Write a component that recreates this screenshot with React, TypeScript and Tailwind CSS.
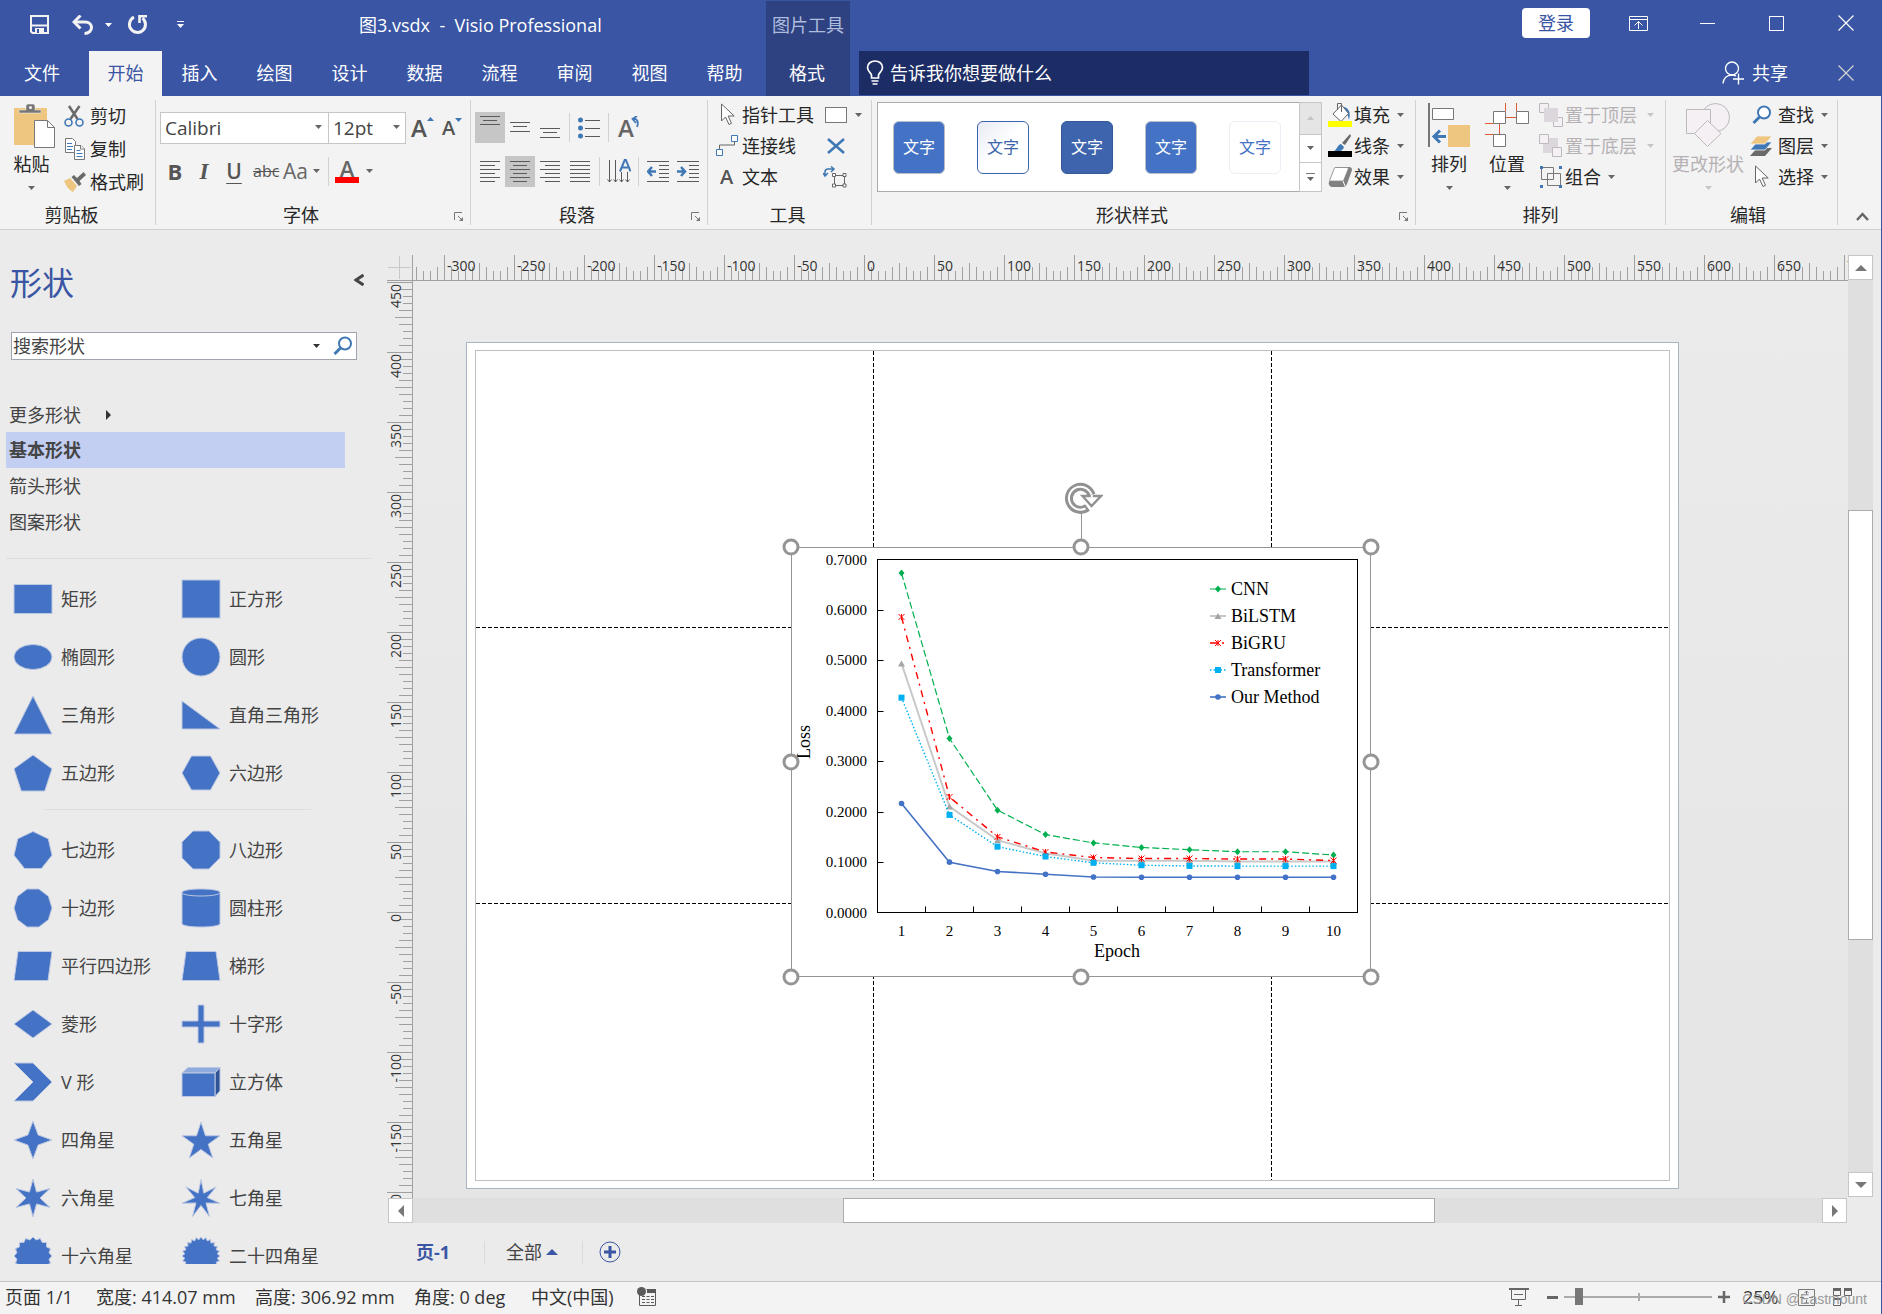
import React from 'react';

const FILL = '#4472c4';

const tabs = ['插入', '绘图', '设计', '数据', '流程', '审阅', '视图', '帮助'];

const Caret = ({ className = 'fill-[#666666]' }: { className?: string }) => (
  <svg className={`shrink-0 ${className}`} width="7" height="4" viewBox="0 0 7 4">
    <path d="M0 0h7L3.5 4z" />
  </svg>
);

interface GroupProps {
  label: string;
  className: string;
  launcher?: boolean;
  children: React.ReactNode;
}

const Group: React.FC<GroupProps> = ({ label, className, launcher, children }) => (
  <section className={`relative my-1 flex h-[125px] flex-col border-r border-[#d2d2d2] ${className}`}>
    <div className="flex h-[105px] shrink-0">{children}</div>
    <h2 className={`flex h-5 items-center justify-center text-[18px] leading-none text-[#262626] ${launcher ? 'pr-7' : 'pr-3'}`}>
      {label}
    </h2>
    {launcher && (
      <button aria-label={`${label}设置`} className="absolute right-[6px] bottom-[3px]">
        <svg width="10" height="10" viewBox="0 0 10 10" fill="none" stroke="#777">
          <path d="M.5 8V.5H8M4 4l4 4" />
          <path d="M9 5v4H5z" fill="#777" stroke="none" />
        </svg>
      </button>
    )}
  </section>
);

interface RowButtonProps {
  icon: React.ReactNode;
  label: string;
  caret?: boolean;
  disabled?: boolean;
  className?: string;
}

const RowButton: React.FC<RowButtonProps> = ({ icon, label, caret, disabled, className = 'h-[31px]' }) => (
  <button
    disabled={disabled}
    className={`flex items-center pb-[2px] text-[18px] leading-none whitespace-nowrap ${disabled ? 'text-[#b5b1b5]' : 'text-[#262626]'} ${className}`}
  >
    <span className="flex w-[26px] shrink-0 items-center">{icon}</span>
    {label}
    {caret && <Caret className={disabled ? 'ml-[10px] fill-[#c8c4c8]' : 'ml-[7px] fill-[#666666]'} />}
  </button>
);

const BigButton: React.FC<RowButtonProps> = ({ icon, label, disabled, className = '' }) => (
  <button
    disabled={disabled}
    className={`flex h-[102px] shrink-0 flex-col items-center pt-[3px] text-[18px] leading-none ${disabled ? 'text-[#b5b1b5]' : 'text-[#262626]'} ${className}`}
  >
    {icon}
    <span className="flex h-8 items-center whitespace-nowrap">{label}</span>
    <Caret className={disabled ? 'mt-[6px] fill-[#c8c4c8]' : 'mt-[6px] fill-[#666666]'} />
  </button>
);

const Lines = ({ rows }: { rows: [number, number, number][] }) => (
  <svg width="20" height="22" viewBox="0 0 20 22" stroke="#5a5a5a">
    {rows.map(([x1, x2, y]) => (
      <line key={y} x1={x1} x2={x2} y1={y + 0.5} y2={y + 0.5} />
    ))}
  </svg>
);

const Divider = ({ className = '' }: { className?: string }) => (
  <span className={`h-[29px] w-px shrink-0 bg-[#d2d2d2] ${className}`} />
);

const Cursor = () => (
  <svg width="16" height="23" viewBox="0 0 16 23" fill="#fff" stroke="#666">
    <path d="M1.5 1v17l4-4 3.5 7.5 2.5-1.2L8.2 13h6z" />
  </svg>
);

const Magnifier = () => (
  <svg width="20" height="20" viewBox="0 0 20 20" fill="none" stroke="#3f78b5">
    <circle cx="12" cy="7.5" r="6" strokeWidth="2" fill="#fff" />
    <path d="M7.5 12L1.5 18" strokeWidth="3" />
  </svg>
);

const CloseIcon = () => (
  <svg width="16" height="16" viewBox="0 0 16 16" fill="none" stroke="currentColor" strokeWidth="1.2">
    <path d="M.5.5l15 15M15.5.5l-15 15" />
  </svg>
);

/* ---------- header ---------- */

const TitleBar = () => (
  <div className="flex h-[51px]">
    <div className="flex w-[766px] items-center pb-[2px]">
      <button aria-label="保存" className="ml-[30px]">
        <svg width="19" height="19" viewBox="0 0 19 19" fill="none" stroke="#f3f3f3" strokeWidth="2">
          <path d="M1 1h17v17H2.5L1 16.5zM1 10.500h17" />
          <path d="M5 13h9v5H5z" fill="#f3f3f3" stroke="none" />
          <path d="M7 14h2v4H7z" fill="#3955a3" stroke="none" />
        </svg>
      </button>
      <button aria-label="撤消" className="ml-[23px]">
        <svg width="22" height="20" viewBox="0 0 22 20" fill="none" stroke="#f3f3f3" strokeWidth="3">
          <path d="M2 7h11c4.500 0 6.500 3 6.500 5.500 0 3-2.500 6-7 6" />
          <path d="M8.500.5L2 7l6.500 6.500" />
        </svg>
      </button>
      <button aria-label="撤消选项" className="ml-[11px]">
        <Caret className="fill-white" />
      </button>
      <button aria-label="重复" className="ml-[15px]">
        <svg width="21" height="21" viewBox="0 0 21 21" fill="none" stroke="#f3f3f3" strokeWidth="3">
          <path d="M7 3.200a8 8 0 1 0 8.500 1" />
          <path d="M12.500 9V2.200H20" strokeWidth="2.600" />
        </svg>
      </button>
      <button aria-label="自定义快速访问工具栏" className="ml-[29px]">
        <svg width="7" height="8" viewBox="0 0 7 8" fill="#fff">
          <path d="M0 0h7v1H0zM0 3h7L3.5 7z" />
        </svg>
      </button>
      <h1 className="ml-[175px] text-[18px] leading-none whitespace-pre text-white">图3.vsdx  -  Visio Professional</h1>
    </div>
    <div className="mt-px flex w-[84px] items-center justify-center bg-[#2e4180] pb-[3px] text-[18px] leading-none whitespace-nowrap text-[#aebcdf]">
      图片工具
    </div>
    <div className="flex flex-1 items-center justify-end pr-px text-white">
      <button className="mr-[14px] mb-[5px] h-[30px] w-[68px] rounded-sm bg-white text-[18px] leading-none text-[#3955a3]">登录</button>
      <button aria-label="功能区显示选项" className="mb-[5px] flex w-[69px] justify-center">
        <svg width="19" height="15" viewBox="0 0 19 15" fill="none" stroke="#fff">
          <path d="M.5.5h18v14H.5zM.5 3.500h18M9.500 13V5.500M5.500 9.500l4-4 4 4" />
        </svg>
      </button>
      <button aria-label="最小化" className="mb-[5px] flex w-[69px] justify-center">
        <span className="h-px w-[15px] bg-white" />
      </button>
      <button aria-label="最大化" className="mb-[5px] flex w-[69px] justify-center">
        <span className="size-[15px] border border-white" />
      </button>
      <button aria-label="关闭" className="mb-[5px] flex w-[69px] justify-center">
        <CloseIcon />
      </button>
    </div>
  </div>
);

const TabBar = () => (
  <div className="flex h-[45px] text-[18px] leading-none text-white">
    <nav className="flex w-[766px]">
      <button className="w-[89px] pr-[5px] pb-[2px]">文件</button>
      <button className="w-[73px] bg-[#f3f3f3] pb-[2px] text-[#3955a3]">开始</button>
      {tabs.map((tab) => (
        <button key={tab} className="w-[75px] pb-[2px]">{tab}</button>
      ))}
    </nav>
    <button className="w-[84px] shrink-0 bg-[#2e4180] pr-[2px] pb-[2px]">格式</button>
    <label className="ml-[9px] flex h-[44px] w-[450px] items-center bg-[#1c2c64] pb-px pl-[7px]">
      <svg width="18" height="25" viewBox="0 0 18 25" fill="none" stroke="#fff" strokeWidth="1.700">
        <path d="M5.500 18v-3c0-2-4-3.500-4-7.500C1.500 3.500 5 1 9 1s7.500 2.500 7.500 6.500c0 4-4 5.500-4 7.500v3z" />
        <path d="M5.500 21h7M6.500 24h5" />
      </svg>
      <input
        aria-label="告诉我"
        placeholder="告诉我你想要做什么"
        className="ml-[6px] h-full flex-1 bg-transparent outline-none placeholder:text-white"
      />
    </label>
    <div className="flex flex-1 items-center justify-end pr-px pb-[2px]">
      <button className="mr-[23px] flex items-center">
        <svg className="mr-2" width="22" height="24" viewBox="0 0 22 24" fill="none" stroke="#fff" strokeWidth="1.400">
          <circle cx="10" cy="7.500" r="6.500" />
          <path d="M1 22.500c.5-5 4-8.500 9-8.500 2 0 3 .4 4 1M16.500 12.500v11M11 18h11" />
        </svg>
        共享
      </button>
      <button aria-label="关闭窗口" className="flex w-[69px] justify-center text-[#d5d5d5]">
        <CloseIcon />
      </button>
    </div>
  </div>
);

/* ---------- ribbon ---------- */

const ClipboardGroup = () => (
  <Group label="剪贴板" className="w-[156px]">
    <BigButton
      label="粘贴"
      className="ml-[13px] w-[43px] pr-[6px]"
      icon={
        <svg className="mr-[-6px]" width="43" height="45" viewBox="0 0 43 45">
          <rect x="1" y="5" width="33" height="37" rx="1" fill="#eec67f" />
          <path d="M6 10V7h7V3c0-1 1-2 2-2h5c1 0 2 1 2 2v4h6v3z" fill="#777" stroke="#f3f3f3" strokeWidth=".5" />
          <circle cx="17.500" cy="4.500" r="1.500" fill="#f3f3f3" />
          <path d="M21.500 17.500h13l7 7v20h-20z" fill="#fff" stroke="#777" />
          <path d="M34.500 17.500v7h7" fill="none" stroke="#777" />
        </svg>
      }
    />
    <div className="ml-2 flex flex-col">
      <RowButton
        className="h-[33px]"
        label="剪切"
        icon={
          <svg width="20" height="22" viewBox="0 0 20 22" fill="none">
            <path d="M5 1l8.500 13M15.500 1L6.500 14" stroke="#6a6a6a" strokeWidth="2.500" />
            <circle cx="4.500" cy="17.500" r="3.500" stroke="#3f78b5" strokeWidth="1.600" />
            <circle cx="15.500" cy="17.500" r="3.500" stroke="#3f78b5" strokeWidth="1.600" />
          </svg>
        }
      />
      <RowButton
        className="h-[33px]"
        label="复制"
        icon={
          <svg className="ml-px" width="20" height="22" viewBox="0 0 20 22" fill="#fff" stroke="#777">
            <path d="M.5.5h7l3 3v11H.5z" />
            <path d="M2 5.500h5M2 8.500h6M2 11.500h5" stroke="#3f78b5" />
            <path d="M9.500 7.500h6.500l3.500 3.500v10.500h-10z" />
            <path d="M15.500 7.500V11h4" />
            <path d="M11.500 12.500h4M11.500 15.500h6M11.500 18.500h6" stroke="#3f78b5" />
          </svg>
        }
      />
      <RowButton
        className="h-[33px]"
        label="格式刷"
        icon={
          <svg width="23" height="20" viewBox="0 0 23 20">
            <path d="M0 9l6-3 7 8-4 6c-4-2-7-6-9-11z" fill="#eec67f" />
            <path d="M7.500 5l2.500-2 3 3 6.500-6 2.500 3-6.500 6 2 3-2.500 2z" fill="#6a6a6a" />
          </svg>
        }
      />
    </div>
  </Group>
);

const FontGroup = () => (
  <Group label="字体" className="w-[315px] pl-1" launcher>
    <div className="flex flex-col text-[#555555]">
      <div className="mt-3 flex h-8 items-center">
        <div className="relative">
          <select
            aria-label="字体名称"
            defaultValue="Calibri"
            className="block h-8 w-[169px] appearance-none border border-[#c6c6c6] bg-white px-1 text-[19px] leading-none text-[#444444]"
          >
            <option>Calibri</option>
          </select>
          <span className="pointer-events-none absolute top-[13px] right-[7px]"><Caret /></span>
        </div>
        <div className="relative">
          <select
            aria-label="字号"
            defaultValue="12pt"
            className="-ml-px block h-8 w-[78px] appearance-none border border-[#c6c6c6] bg-white px-1 text-[19px] leading-none text-[#444444]"
          >
            <option>12pt</option>
          </select>
          <span className="pointer-events-none absolute top-[13px] right-[6px]"><Caret /></span>
        </div>
        <button aria-label="增大字号" className="ml-[5px] flex items-start text-[24px] leading-none font-semibold">
          A
          <svg className="mt-px" width="7" height="4" viewBox="0 0 7 4" fill="#3f78b5"><path d="M0 4h7L3.500 0z" /></svg>
        </button>
        <button aria-label="减小字号" className="ml-[8px] flex items-start text-[20px] leading-none font-semibold">
          A
          <svg width="7" height="4" viewBox="0 0 7 4" fill="#3f78b5"><path d="M0 0h7L3.500 4z" /></svg>
        </button>
      </div>
      <div className="mt-3 flex h-[30px] items-center leading-none">
        <button className="ml-[7px] w-[16px] text-[22px] font-bold">B</button>
        <button className="ml-[13px] w-[16px] font-['Liberation_Serif',serif] text-[23px] font-bold italic">I</button>
        <button className="ml-[13px] w-[18px] text-[21px] font-semibold underline decoration-1 underline-offset-4">U</button>
        <button className="ml-[10px] w-[26px] text-[16px] line-through">abc</button>
        <button className="ml-1 flex items-center text-[21px] text-[#666666]">
          Aa<span className="ml-[5px]"><Caret /></span>
        </button>
        <Divider className="ml-[8px]" />
        <button aria-label="字体颜色" className="ml-[6px] flex w-6 flex-col items-center text-[22px] font-semibold text-[#666666]">
          <span className="h-[18px] leading-[18px]">A</span>
          <span className="h-[6px] w-6 bg-[#ff0000]" />
        </button>
        <button aria-label="字体颜色选项" className="ml-[7px]"><Caret /></button>
      </div>
    </div>
  </Group>
);

const ParagraphGroup = () => (
  <Group label="段落" className="w-[237px] pl-1" launcher>
    <div className="flex flex-col">
      <div className="mt-3 flex h-[31px] items-center">
        <button aria-label="顶端对齐" className="flex h-[31px] w-[30px] justify-center bg-[#c6c6c6]">
          <Lines rows={[[0, 20, 4], [3, 17, 8], [0, 20, 12]]} />
        </button>
        <button aria-label="中部对齐" className="flex w-[30px] justify-center">
          <Lines rows={[[0, 20, 5], [3, 17, 9], [0, 20, 14]]} />
        </button>
        <button aria-label="底端对齐" className="flex w-[30px] justify-center">
          <Lines rows={[[0, 20, 11], [3, 17, 15], [0, 20, 20]]} />
        </button>
        <Divider className="ml-[4px]" />
        <button aria-label="项目符号" className="ml-[8px]">
          <svg width="22" height="22" viewBox="0 0 22 22" fill="#3f78b5">
            <circle cx="2.500" cy="3" r="2.500" />
            <circle cx="2.500" cy="11" r="2.500" />
            <circle cx="2.500" cy="19" r="2.500" />
            <path d="M7 3.500h15M7 11.500h15M7 19.500h15" stroke="#5a5a5a" />
          </svg>
        </button>
        <Divider className="ml-[8px]" />
        <button aria-label="旋转文本" className="ml-[9px] flex items-start text-[24px] leading-none font-semibold text-[#666666]">
          A
          <svg className="-ml-[3px]" width="9" height="12" viewBox="0 0 9 12" fill="none" stroke="#3f78b5" strokeWidth="1.800">
            <path d="M2 3c4-1 6 3 4 8M6 0L1.500 3 5 7" />
          </svg>
        </button>
      </div>
      <div className="mt-[13px] flex h-[31px] items-center">
        <button aria-label="左对齐" className="flex w-[30px] justify-center">
          <Lines rows={[[0, 20, 0], [0, 15, 4], [0, 20, 8], [0, 15, 12], [0, 20, 16], [0, 15, 20]]} />
        </button>
        <button aria-label="居中" className="flex h-[31px] w-[30px] items-center justify-center bg-[#c6c6c6]">
          <Lines rows={[[0, 20, 0], [3, 17, 4], [0, 20, 8], [3, 17, 12], [0, 20, 16], [3, 17, 20]]} />
        </button>
        <button aria-label="右对齐" className="flex w-[30px] justify-center">
          <Lines rows={[[0, 20, 0], [5, 20, 4], [0, 20, 8], [5, 20, 12], [0, 20, 16], [5, 20, 20]]} />
        </button>
        <button aria-label="两端对齐" className="flex w-[30px] justify-center">
          <Lines rows={[[0, 20, 0], [0, 20, 4], [0, 20, 8], [0, 20, 12], [0, 20, 16], [0, 20, 20]]} />
        </button>
        <Divider className="ml-[4px]" />
        <button aria-label="文字方向" className="ml-[7px]">
          <svg width="24" height="25" viewBox="0 0 24 25" fill="none" stroke="#5a5a5a">
            <path d="M2.500 1v22M8.500 1v22M14.500 13v10M20.500 13v10M.5 20.500l2 2.500 2-2.500M6.500 20.500l2 2.500 2-2.500M12.500 20.500l2 2.500 2-2.500M18.500 20.500l2 2.500 2-2.500" />
            <path d="M13 12.500L17.700 1h1.200l4.600 11.500M14.800 8.500h7" stroke="#3f78b5" strokeWidth="2" />
          </svg>
        </button>
        <Divider className="ml-[7px]" />
        <button aria-label="减少缩进量" className="ml-[8px]">
          <svg width="22" height="22" viewBox="0 0 22 22" fill="none" stroke="#5a5a5a">
            <path d="M0 .5h22M12 4.500h10M12 8.500h10M12 12.500h10M12 16.500h10M0 20.500h22" />
            <path d="M9 10.500H2M5 6l-4 4.500L5 15" stroke="#3f78b5" strokeWidth="2.500" />
          </svg>
        </button>
        <button aria-label="增加缩进量" className="ml-[8px]">
          <svg width="22" height="22" viewBox="0 0 22 22" fill="none" stroke="#5a5a5a">
            <path d="M0 .5h22M12 4.500h10M12 8.500h10M12 12.500h10M12 16.500h10M0 20.500h22" />
            <path d="M0 10.500h7M4 6l4 4.500L4 15" stroke="#3f78b5" strokeWidth="2.500" />
          </svg>
        </button>
      </div>
    </div>
  </Group>
);

const ToolsGroup = () => (
  <Group label="工具" className="w-[164px] pl-2">
    <div className="flex w-[107px] flex-col">
      <RowButton label="指针工具" icon={<span className="ml-[4px]"><Cursor /></span>} />
      <RowButton
        label="连接线"
        icon={
          <svg width="22" height="21" viewBox="0 0 22 21" fill="#fff" stroke="#3f78b5">
            <path d="M3.500 14v-4h15V6" fill="none" stroke="#666" />
            <path d="M15.500.5h6v6h-6zM.5 14.500h6v6h-6z" />
          </svg>
        }
      />
      <RowButton label="文本" icon={<span className="ml-[4px] text-[20px] font-semibold text-[#555555]">A</span>} />
    </div>
    <div className="flex flex-col">
      <button aria-label="矩形" className="flex h-[31px] items-center pb-[2px] pl-[2px]">
        <span className="h-4 w-[22px] border border-[#777777] bg-white" />
        <span className="ml-[8px]"><Caret /></span>
      </button>
      <button aria-label="连接点" className="flex h-[31px] items-center pb-[2px] pl-[4px]">
        <svg width="18" height="16" viewBox="0 0 18 16" fill="none" stroke="#3f78b5" strokeWidth="2.500">
          <path d="M1 1l16 14M17 1L1 15" />
        </svg>
      </button>
      <button aria-label="文本块" className="flex h-[31px] items-center pb-[2px]">
        <svg width="24" height="22" viewBox="0 0 24 22" fill="none" stroke="#666">
          <path d="M2 10V6c0-2 1-3 3-3h5M0 7l2 3 3-3M8 .5L11 3 8 6" stroke="#3f78b5" strokeWidth="1.500" />
          <path d="M11.500 9.500h10v10h-10z" />
          <path d="M9.500 7.500h3v3h-3zM20 7.500h3v3h-3zM9.500 18h3v3h-3zM20 18h3v3h-3z" fill="#fff" />
        </svg>
      </button>
    </div>
  </Group>
);

const styleTiles = [
  'border-[#b9bdc6] bg-[#4472c4] text-white',
  'border-[#3c64ac] bg-linear-to-br from-[#e9ebf5] via-white to-white text-[#3c64ac]',
  'border-[#35599b] bg-[#3d64ac] text-white',
  'border-[#b9bdc6] bg-[#4472c4] text-white',
  'border-[#eceef5] bg-white text-[#4472c4]',
];

const StylesGroup = () => (
  <Group label="形状样式" className="min-w-[544px] flex-1 pl-[5px]" launcher>
    <div className="mt-[2px] flex h-[90px] flex-1">
      <div className="flex flex-1 items-center gap-8 border border-[#ababab] bg-white pl-[15px]">
        {styleTiles.map((tile, i) => (
          <button key={i} className={`h-[53px] w-[52px] shrink-0 rounded-md border pb-px text-[16px] leading-none ${tile}`}>
            文字
          </button>
        ))}
      </div>
      <div className="-ml-px flex w-[23px] flex-col">
        <button aria-label="上一行" className="flex h-[33px] items-center justify-center border border-[#c6c6c6] bg-[#e5e5e5]">
          <Caret className="rotate-180 fill-[#c4c4c4]" />
        </button>
        <button aria-label="下一行" className="-mt-px flex h-[30px] items-center justify-center border border-[#c6c6c6] bg-white">
          <Caret />
        </button>
        <button aria-label="更多样式" className="-mt-px flex h-[30px] flex-col items-center justify-center gap-[3px] border border-[#c6c6c6] bg-white">
          <span className="h-px w-[9px] bg-[#777777]" />
          <Caret />
        </button>
      </div>
    </div>
    <div className="ml-[6px] flex w-[87px] flex-col">
      <RowButton
        caret
        label="填充"
        icon={
          <svg width="25" height="25" viewBox="0 0 25 25">
            <path d="M16 5c5 1 7 6 5 13-1-5-2-7-5-8z" fill="#3f78b5" />
            <path d="M5 12l8.500-9 7 8.500-7.500 8z" fill="#fff" stroke="#666" />
            <path d="M9.500 8V1.500h4V10" fill="none" stroke="#666" />
            <rect y="19" width="24" height="6" fill="#ffff00" />
          </svg>
        }
      />
      <RowButton
        caret
        label="线条"
        icon={
          <svg width="25" height="25" viewBox="0 0 25 25">
            <path d="M22 1l1 2-6 9-3-2z" fill="#6a6a6a" />
            <path d="M13 11l3 3c-1 4-5 5-11 5 4-2 4-7 8-8z" fill="#3f78b5" />
            <rect y="18" width="24" height="6" fill="#000" />
          </svg>
        }
      />
      <RowButton
        caret
        label="效果"
        icon={
          <svg width="25" height="22" viewBox="0 0 25 22">
            <path d="M7 1h14c2 0 3 1 3 3l-5 14c-1 2-2 3-4 3H4c-2 0-4-3-3-5z" fill="#808080" />
            <path d="M8 1.500h11c1 0 1.500 1 1 2l-4 10c-.4 1-1 1.500-2 1.500H3c-1 0-1.400-.8-1-1.600L6 3c.4-1 1-1.500 2-1.500z" fill="#fff" stroke="#888" strokeWidth=".8" />
            <path d="M15 15l2 5" stroke="#fff" />
          </svg>
        }
      />
    </div>
  </Group>
);

const ArrangeGroup = () => (
  <Group label="排列" className="w-[250px] pl-3">
    <BigButton
      label="排列"
      className="w-[42px]"
      icon={
        <svg width="42" height="45" viewBox="0 0 42 45">
          <path d="M0 0h2v44H0z" fill="#777" />
          <path d="M4.500 5.500h21v11h-21z" fill="#fff" stroke="#777" />
          <path d="M20 22h22v22H20z" fill="#eec67f" />
          <path d="M18 33.500H6M12 27.500l-6 6 6 6" fill="none" stroke="#3f78b5" strokeWidth="3" />
        </svg>
      }
    />
    <BigButton
      label="位置"
      className="ml-[15px] w-[44px]"
      icon={
        <svg width="44" height="45" viewBox="0 0 44 45" fill="#fff" stroke="#777">
          <path d="M20.500 0v8M31.500 0v8M21 14.500h10M0 20.500h8M14.500 21v10M0 31.500h8" stroke="#dc5b36" />
          <path d="M8.500 8.500h12v12h-12zM31.500 8.500h12v12h-12zM8.500 31.500h12v12h-12z" />
        </svg>
      }
    />
    <div className="ml-[10px] flex flex-col">
      <RowButton
        caret
        disabled
        label="置于顶层"
        icon={
          <svg width="25" height="24" viewBox="0 0 25 24" fill="#f4f0f4" stroke="#bdb8bd">
            <path d="M.5.5h9v9h-9zM14.500 14.500h9v9h-9z" />
            <path d="M5 5h14v14H5z" fill="#dcd7dc" stroke="none" />
          </svg>
        }
      />
      <RowButton
        caret
        disabled
        label="置于底层"
        icon={
          <svg width="25" height="24" viewBox="0 0 25 24" fill="#f4f0f4" stroke="#bdb8bd">
            <path d="M4 4h15v15H4z" fill="#dcd7dc" stroke="none" />
            <path d="M.5.5h9v9h-9zM13.500 13.500h9v9h-9z" />
          </svg>
        }
      />
      <RowButton
        caret
        label="组合"
        icon={
          <svg width="25" height="24" viewBox="0 0 25 24" fill="none" stroke="#777">
            <path d="M2.500 2.500h12v12h-12zM8.500 8.500h13v12h-13z" />
            <path d="M1 1h3v3H1zM20 1h3v3h-3zM1 20h3v3H1zM20 20h3v3h-3z" fill="#3f78b5" stroke="none" />
          </svg>
        }
      />
    </div>
  </Group>
);

const EditGroup = () => (
  <Group label="编辑" className="w-[172px] pl-[5px]">
    <BigButton
      disabled
      label="更改形状"
      className="w-[74px]"
      icon={
        <svg width="44" height="45" viewBox="0 0 44 45" fill="#f4f0f4" stroke="#bdb8bd">
          <circle cx="29.500" cy="14.500" r="14" />
          <path d="M.5 6.500h24v24H.5z" />
          <path d="M21.500 17.500L35 30.500 21.500 43.500 8.500 30.500z" />
        </svg>
      }
    />
    <div className="ml-[7px] flex flex-col">
      <RowButton caret label="查找" icon={<Magnifier />} />
      <RowButton
        caret
        label="图层"
        icon={
          <svg className="-ml-[3px]" width="24" height="20" viewBox="0 0 24 20">
            <path d="M8 12h15l-7 8H1z" fill="#6a6a6a" />
            <path d="M8 6h15l-7 8H1z" fill="#3f78b5" stroke="#f3f3f3" strokeWidth=".8" />
            <path d="M8 0h15l-7 8H1z" fill="#eec67f" stroke="#f3f3f3" strokeWidth=".8" />
          </svg>
        }
      />
      <RowButton caret label="选择" icon={<span className="ml-[2px]"><Cursor /></span>} />
    </div>
  </Group>
);

const Ribbon = () => (
  <div className="flex h-[134px] shrink-0 border-b border-[#d0d0d0] bg-[#f3f3f3]">
    <ClipboardGroup />
    <FontGroup />
    <ParagraphGroup />
    <ToolsGroup />
    <StylesGroup />
    <ArrangeGroup />
    <EditGroup />
    <button aria-label="折叠功能区" className="flex w-[43px] items-end justify-center pb-2 pl-[6px]">
      <svg width="13" height="9" viewBox="0 0 13 9" fill="none" stroke="#666" strokeWidth="2.500">
        <path d="M1 8l5.500-6L12 8" />
      </svg>
    </button>
  </div>
);

/* ---------- shapes panel ---------- */

// Scales a ring of points so it fills a w x h box centred in the 40px cell
const fit = (ring: number[][], w: number, h: number) => {
  const xs = ring.map((p) => p[0]);
  const ys = ring.map((p) => p[1]);
  const [minX, maxX, minY, maxY] = [Math.min(...xs), Math.max(...xs), Math.min(...ys), Math.max(...ys)];
  return ring
    .map(([x, y]) => `${20 - w / 2 + ((x - minX) / (maxX - minX)) * w},${20 - h / 2 + ((y - minY) / (maxY - minY)) * h}`)
    .join(' ');
};

const polygon = (n: number, w: number, h: number, turn = 0) =>
  fit(
    Array.from({ length: n }, (_, i) => {
      const a = ((i + turn) / n) * Math.PI * 2;
      return [Math.sin(a), -Math.cos(a)];
    }),
    w,
    h
  );

const star = (n: number, inner: number, w: number, h: number) =>
  fit(
    Array.from({ length: n * 2 }, (_, i) => {
      const a = (i / n) * Math.PI;
      const r = i % 2 ? inner : 1;
      return [Math.sin(a) * r, -Math.cos(a) * r];
    }),
    w,
    h
  );

const poly = (points: string) => <polygon points={points} />;

const basicShapes: [string, React.ReactNode][] = [
  ['矩形', <rect x="1" y="5.500" width="38" height="29" />],
  ['正方形', <rect x="1" y="1" width="38" height="38" />],
  ['椭圆形', <ellipse cx="20" cy="20" rx="19" ry="12.500" />],
  ['圆形', <circle cx="20" cy="20" r="19" />],
  ['三角形', poly('20,1 39,39 1,39')],
  ['直角三角形', poly('1,6 39,34 1,34')],
  ['五边形', poly(polygon(5, 38, 36))],
  ['六边形', poly(polygon(6, 38, 34, 0.5))],
];

const moreShapes: [string, React.ReactNode][] = [
  ['七边形', poly(polygon(7, 38, 37))],
  ['八边形', poly(polygon(8, 38, 38, 0.5))],
  ['十边形', poly(polygon(10, 38, 38, 0.5))],
  [
    '圆柱形',
    <>
      <path d="M1 4.500C1 2.500 9 1 20 1s19 1.500 19 3.500v31c0 2-8 3.500-19 3.500S1 37.500 1 35.500z" />
      <path d="M1 4.500C1 6.500 9 8 20 8s19-1.500 19-3.500" fill="none" />
    </>,
  ],
  ['平行四边形', poly('5,5.500 39,5.500 35,34.500 1,34.500')],
  ['梯形', poly('5,5.500 35,5.500 39,34.500 1,34.500')],
  ['菱形', poly('20,6 39,20 20,34 1,20')],
  ['十字形', poly('17,1 23,1 23,17 39,17 39,23 23,23 23,39 17,39 17,23 1,23 1,17 17,17')],
  ['V 形', poly('1,1 20,1 39,20 20,39 1,39 20,20')],
  [
    '立方体',
    <>
      <path d="M1 11l6-5.500h32L34 11z" fill="#8faadc" />
      <path d="M34 11l5-5.500V29l-5 5.500z" fill="#2f5597" />
      <path d="M1 11h33v23.500H1z" />
    </>,
  ],
  ['四角星', poly(star(4, 0.38, 38, 38))],
  ['五角星', poly(star(5, 0.38, 38, 36))],
  ['六角星', poly(star(6, 0.36, 34, 38))],
  ['七角星', poly(star(7, 0.33, 38, 37))],
  ['十六角星', poly(star(16, 0.86, 38, 38))],
  ['二十四角星', poly(star(24, 0.86, 38, 38))],
];

const ShapeGrid = ({ shapes }: { shapes: [string, React.ReactNode][] }) => (
  <div className="grid grid-cols-[168px_1fr]">
    {shapes.map(([name, drawing]) => (
      <button key={name} className="flex h-[58px] items-center text-left text-[18px] leading-none whitespace-nowrap text-[#444444]">
        <svg className="mr-2 shrink-0" width="40" height="40" viewBox="0 0 40 40" fill={FILL} stroke="#bcc8e2">
          {drawing}
        </svg>
        {name}
      </button>
    ))}
  </div>
);

const ShapesPanel = () => (
  <aside className="flex w-[387px] shrink-0 flex-col overflow-hidden text-[18px] leading-none text-[#444444]">
    <div className="mt-8 flex h-[42px] items-center justify-between pr-[23px] pl-[10px]">
      <h2 className="text-[32px] leading-none text-[#3955a3]">形状</h2>
      <button aria-label="折叠形状窗口" className="mb-[6px]">
        <svg width="10" height="12" viewBox="0 0 10 12" fill="none" stroke="#444" strokeWidth="3">
          <path d="M9.500 1L2 6l7.500 5" />
        </svg>
      </button>
    </div>
    <div className="mt-7 ml-[11px] flex h-7 w-[346px] shrink-0 items-center border border-[#a0a5ad] bg-white pr-[3px]">
      <input
        aria-label="搜索形状"
        placeholder="搜索形状"
        className="h-full min-w-0 flex-1 bg-transparent pl-px outline-none placeholder:text-[#444444]"
      />
      <button aria-label="搜索选项"><Caret className="mr-[13px] fill-[#333333]" /></button>
      <button aria-label="搜索"><Magnifier /></button>
    </div>
    <div className="mt-[38px] flex flex-col items-start pl-[6px]">
      <button className="flex h-[34px] items-center pl-[3px]">
        更多形状
        <svg className="ml-[25px]" width="5" height="10" viewBox="0 0 5 10" fill="#333"><path d="M0 0v10l5-5z" /></svg>
      </button>
      <button className="h-9 w-[339px] bg-[#c2cef2] pl-[3px] text-left font-bold">基本形状</button>
      <button className="h-9 pl-[3px]">箭头形状</button>
      <button className="h-9 pl-[3px]">图案形状</button>
    </div>
    <hr className="mt-[18px] mr-4 ml-[6px] border-[#dedede]" />
    <div className="mt-[11px] mb-[17px] flex-1 overflow-hidden pl-[13px]">
      <ShapeGrid shapes={basicShapes} />
      <hr className="mt-[7px] mr-[76px] mb-[11px] ml-[31px] border-[#dedede]" />
      <ShapeGrid shapes={moreShapes} />
    </div>
  </aside>
);

/* ---------- drawing area ---------- */

// Ruler step is 70px for 50mm, split in ten
const tickLength = (i: number) => [26, 14, 10, 10, 14, 18, 14, 10, 10, 14][((i % 10) + 10) % 10];

const HorizontalRuler = () => (
  <svg className="h-[26px] min-w-0 flex-1" stroke="#a0a0a0">
    <path d={Array.from({ length: 210 }, (_, k) => `M${3.5 + k * 7} ${26 - tickLength(k + 6)}V26`).join('')} />
    <line x1="0" x2="100%" y1="25.500" y2="25.500" />
    <g stroke="none" fill="#333" fontSize="14">
      {Array.from({ length: 21 }, (_, i) => (
        <text key={i} x={34 + i * 70} y="16">{-300 + i * 50}</text>
      ))}
    </g>
  </svg>
);

const VerticalRuler = () => (
  <svg className="h-full w-[26px] shrink-0" stroke="#a0a0a0">
    <path d={Array.from({ length: 131 }, (_, k) => `M${26 - tickLength(k)} ${1.5 + k * 7}H26`).join('')} />
    <line x1="25.500" x2="25.500" y1="0" y2="100%" />
    <g stroke="none" fill="#333" fontSize="14" textAnchor="end">
      {Array.from({ length: 14 }, (_, i) => (
        <text key={i} transform={`translate(14 ${3 + i * 70}) rotate(-90)`}>{450 - i * 50}</text>
      ))}
    </g>
  </svg>
);

const PLOT = { left: 86.5, right: 566.5, top: 12.5, bottom: 365.5 };
const px = (i: number) => PLOT.left + 24 + i * 48;
const py = (v: number) => PLOT.bottom - (v / 0.7) * (PLOT.bottom - PLOT.top);

const Marker = ({ kind, x, y }: { kind: string; x: number; y: number }) => {
  switch (kind) {
    case 'diamond':
      return <path d={`M${x} ${y - 3.5}l3 3.500-3 3.500-3-3.500z`} fill="#00b050" />;
    case 'triangle':
      return <path d={`M${x} ${y - 3}l3.500 6h-7z`} fill="#a5a5a5" />;
    case 'cross':
      return <path d={`M${x - 3} ${y - 3}l6 6M${x + 3} ${y - 3}l-6 6M${x} ${y - 3}v6`} stroke="#ff0000" fill="none" />;
    case 'square':
      return <rect x={x - 3} y={y - 3} width="6" height="6" fill="#00b0f0" />;
    default:
      return <circle cx={x} cy={y} r="2.800" fill="#4472c4" />;
  }
};

const series = [
  { name: 'CNN', kind: 'diamond', color: '#00b050', width: 1.2, dash: '7 3', values: [0.673, 0.345, 0.203, 0.1545, 0.138, 0.129, 0.1245, 0.1205, 0.1205, 0.114] },
  { name: 'BiLSTM', kind: 'triangle', color: '#c9c9c9', width: 2, dash: '', values: [0.494, 0.21, 0.1435, 0.1176, 0.1025, 0.1025, 0.1025, 0.101, 0.101, 0.101] },
  { name: 'BiGRU', kind: 'cross', color: '#ff0000', width: 1.4, dash: '7 5 2 5', values: [0.586, 0.229, 0.15, 0.12, 0.109, 0.107, 0.107, 0.106, 0.106, 0.103] },
  { name: 'Transformer', kind: 'square', color: '#00b0f0', width: 1.4, dash: '1.500 2', values: [0.426, 0.1935, 0.1306, 0.111, 0.0985, 0.0937, 0.0923, 0.092, 0.092, 0.092] },
  { name: 'Our Method', kind: 'dot', color: '#4472c4', width: 1.6, dash: '', values: [0.216, 0.0998, 0.0813, 0.0759, 0.0704, 0.07, 0.07, 0.07, 0.07, 0.07] },
];

const LossChart = () => (
  <svg className="block size-full font-['Liberation_Serif',serif]" viewBox="0 0 580 430">
    <rect x={PLOT.left} y={PLOT.top} width={480} height={353} fill="#fff" stroke="#000" />
    {Array.from({ length: 8 }, (_, i) => (
      <g key={i}>
        {i > 0 && i < 7 && <path d={`M${PLOT.left} ${Math.round(py(i / 10)) + 0.5}h6`} stroke="#000" />}
        <text x="76" y={py(i / 10) + 5} fontSize="15" textAnchor="end">{(i / 10).toFixed(4)}</text>
      </g>
    ))}
    {Array.from({ length: 10 }, (_, i) => (
      <g key={i}>
        {i > 0 && <path d={`M${PLOT.left + i * 48} ${PLOT.bottom}v-6`} stroke="#000" />}
        <text x={px(i)} y="389" fontSize="15" textAnchor="middle">{i + 1}</text>
      </g>
    ))}
    <text x="326" y="410" fontSize="18" textAnchor="middle">Epoch</text>
    <text transform="translate(19 195) rotate(-90)" fontSize="18" textAnchor="middle">Loss</text>
    {series.map((s, n) => (
      <g key={s.name}>
        <polyline
          points={s.values.map((v, i) => `${px(i)},${py(v)}`).join(' ')}
          fill="none"
          stroke={s.color}
          strokeWidth={s.width}
          strokeDasharray={s.dash}
        />
        {s.values.map((v, i) => (
          <Marker key={i} kind={s.kind} x={px(i)} y={py(v)} />
        ))}
        <path d={`M419 ${42 + n * 27}h16`} stroke={s.color} strokeWidth={s.width} strokeDasharray={s.dash} />
        <Marker kind={s.kind} x={427} y={42 + n * 27} />
        <text x="440" y={48 + n * 27} fontSize="18">{s.name}</text>
      </g>
    ))}
  </svg>
);

const handles = [
  'left-0 top-0', 'left-1/2 top-0', 'left-full top-0',
  'left-0 top-1/2', 'left-full top-1/2',
  'left-0 top-full', 'left-1/2 top-full', 'left-full top-full',
];

const Canvas = () => (
  <div className="relative min-w-0 flex-1 overflow-hidden bg-linear-to-b from-[#ebebeb] to-[#e5e5e5]">
    <div className="absolute top-[61px] left-[53px] h-[847px] w-[1213px] border border-[#a9b4c3] bg-white">
      <div className="absolute inset-x-[8px] inset-y-[7px] border border-[#bfbfbf]">
        <span className="absolute inset-y-0 left-[397px] w-px bg-[repeating-linear-gradient(to_bottom,#000_0_4px,transparent_4px_6px)]" />
        <span className="absolute inset-y-0 left-[795px] w-px bg-[repeating-linear-gradient(to_bottom,#000_0_4px,transparent_4px_6px)]" />
        <span className="absolute inset-x-0 top-[276px] h-px bg-[repeating-linear-gradient(to_right,#000_0_4px,transparent_4px_6px)]" />
        <span className="absolute inset-x-0 top-[552px] h-px bg-[repeating-linear-gradient(to_right,#000_0_4px,transparent_4px_6px)]" />
      </div>
    </div>
    <figure className="absolute top-[266px] left-[378px] h-[430px] w-[580px] bg-white">
      <LossChart />
      <div className="absolute inset-0 border border-[#959595]" />
      <span className="absolute -top-9 left-1/2 h-9 w-px bg-[#959595]" />
      <svg className="absolute -top-[66px] left-[274px]" width="38" height="34" viewBox="0 0 38 34" fill="none">
        <circle cx="15.500" cy="17" r="15" fill="#fff" />
        <path d="M22.500 26.500A11.500 11.500 0 1 1 26.500 14" stroke="#919191" strokeWidth="8" />
        <path d="M20.500 27.500A11.500 11.500 0 1 1 26.800 15.500" stroke="#fff" strokeWidth="2" />
        <path d="M17.500 15h18.500L26.500 25z" fill="#fff" stroke="#919191" strokeWidth="2.400" />
        <path d="M26.800 14v4" stroke="#fff" strokeWidth="2" />
      </svg>
      {handles.map((pos) => (
        <span key={pos} className={`absolute size-[17px] -translate-1/2 rounded-full border-3 border-[#959595] bg-white ${pos}`} />
      ))}
    </figure>
  </div>
);

const ScrollButton = ({ label, d }: { label: string; d: string }) => (
  <button aria-label={label} className="flex size-[25px] shrink-0 items-center justify-center border border-[#c6c6c6] bg-white">
    <svg width="12" height="12" viewBox="0 0 12 12" fill="#777"><path d={d} /></svg>
  </button>
);

const Workspace = () => (
  <main className="flex min-w-0 flex-1 flex-col pt-[25px] pr-2">
    <div className="flex min-h-0 flex-1">
      <div className="flex min-w-0 flex-1 flex-col">
        <div className="flex h-[26px] shrink-0">
          <svg width="26" height="26" viewBox="0 0 26 26" stroke="#c8c8c8">
            <path d="M1 12.500h23M12.500 1v23" />
            <path d="M0 25.500h26M25.500 0v26" stroke="#a0a0a0" />
          </svg>
          <HorizontalRuler />
        </div>
        <div className="flex min-h-0 flex-1">
          <VerticalRuler />
          <Canvas />
        </div>
        <div className="mr-px ml-px flex h-[25px] shrink-0 bg-[#dfdfdf]">
          <ScrollButton label="向左滚动" d="M9 0v12L3 6z" />
          <div className="grid flex-1 grid-cols-[430fr_593fr_387fr]">
            <span className="col-start-2 border border-[#ababab] bg-white" />
          </div>
          <ScrollButton label="向右滚动" d="M3 0v12l6-6z" />
        </div>
      </div>
      <div className="mb-[26px] flex w-[25px] flex-col bg-[#dfdfdf]">
        <ScrollButton label="向上滚动" d="M0 9h12L6 3z" />
        <div className="grid flex-1 grid-rows-[230fr_429fr_232fr]">
          <span className="row-start-2 border border-[#ababab] bg-white" />
        </div>
        <ScrollButton label="向下滚动" d="M0 3h12L6 9z" />
      </div>
    </div>
    <div className="flex h-[58px] shrink-0 items-center pl-[29px] text-[18px] leading-none text-[#444444]">
      <button className="w-[68px] text-left font-bold text-[#3955a3]">页-1</button>
      <span className="h-[23px] w-px bg-[#dadada]" />
      <button className="flex items-center pl-[21px]">
        全部
        <svg className="ml-1" width="12" height="6" viewBox="0 0 12 6" fill="#3955a3"><path d="M0 6h12L6 0z" /></svg>
      </button>
      <span className="ml-6 h-[23px] w-px bg-[#dadada]" />
      <button aria-label="新建页" className="ml-4">
        <svg width="22" height="22" viewBox="0 0 22 22" fill="none" stroke="#3955a3">
          <circle cx="11" cy="11" r="10" />
          <path d="M11 5v12M5 11h12" strokeWidth="3" />
        </svg>
      </button>
    </div>
  </main>
);

const StatusBar = () => (
  <footer className="relative flex h-[33px] shrink-0 items-center border-t border-[#c6c6c6] bg-[#f3f3f3] pb-[2px] pl-[5px] text-[18px] leading-none whitespace-nowrap text-[#333333]">
    <span className="w-[91px]">页面 1/1</span>
    <span className="w-[159px]">宽度: 414.07 mm</span>
    <span className="w-[159px]">高度: 306.92 mm</span>
    <span className="w-[117px]">角度: 0 deg</span>
    <button className="w-[106px] text-left">中文(中国)</button>
    <button aria-label="宏">
      <svg width="20" height="20" viewBox="0 0 20 20" fill="none" stroke="#5a5a5a">
        <path d="M2.500 6v12.500h16V2.500h-9" />
        <path d="M10 2h9v4h-9z" fill="#5a5a5a" stroke="none" />
        <circle cx="4.500" cy="4.500" r="4.500" fill="#5a5a5a" stroke="none" />
        <path d="M5 9.500h12M5 12.500h12M5 15.500h12" strokeDasharray="3 1.500" />
      </svg>
    </button>
    <div className="ml-auto flex items-center pr-7">
      <button aria-label="演示模式">
        <svg width="20" height="19" viewBox="0 0 20 19" fill="none" stroke="#666">
          <path d="M0 1h20" strokeWidth="2" />
          <path d="M2.500 2v9.500h14V2M5 6.500h9M9.500 12v6M6 17.500h7" />
        </svg>
      </button>
      <button aria-label="缩小" className="ml-[18px] h-[3px] w-[11px] bg-[#666666]" />
      <div className="relative ml-[6px] flex h-[18px] w-[148px] items-center">
        <span className="absolute left-1/2 h-2 w-[2px] bg-[#ababab]" />
        <input
          type="range"
          aria-label="缩放"
          min={0}
          max={100}
          defaultValue={8}
          className="relative h-[18px] w-full appearance-none bg-transparent [&::-webkit-slider-runnable-track]:h-[2px] [&::-webkit-slider-runnable-track]:bg-[#ababab] [&::-webkit-slider-thumb]:-mt-2 [&::-webkit-slider-thumb]:h-[17px] [&::-webkit-slider-thumb]:w-2 [&::-webkit-slider-thumb]:appearance-none [&::-webkit-slider-thumb]:bg-[#777777]"
        />
      </div>
      <button aria-label="放大" className="ml-[6px]">
        <svg width="12" height="12" viewBox="0 0 12 12" stroke="#666" strokeWidth="2.500"><path d="M6 0v12M0 6h12" /></svg>
      </button>
      <button className="ml-[13px] w-[55px] text-left">25%</button>
      <button aria-label="适应窗口">
        <svg width="17" height="17" viewBox="0 0 17 17" fill="none" stroke="#777">
          <path d="M.5.5h16v16H.5zM8.500 2v4M8.500 11v4M2 8.500h4M11 8.500h4M6.500 4l2-2 2 2M6.500 13l2 2 2-2" />
        </svg>
      </button>
      <button aria-label="切换窗口" className="ml-[18px]">
        <svg width="20" height="18" viewBox="0 0 20 18" fill="none" stroke="#666">
          <path d="M.5.5h7v7h-7zM11.500.5h7v7h-7zM.5 10.500h7v7h-7z" />
          <path d="M0 0h8v3H0zM11 0h8v3h-8zM0 10h8v2H0z" fill="#666" stroke="none" />
        </svg>
      </button>
    </div>
    <span className="pointer-events-none absolute right-[14px] bottom-[8px] font-['Liberation_Sans',sans-serif] text-[14px] text-[#9a9a9a]">
      CSDN @Eastmount
    </span>
  </footer>
);

export default function App() {
  return (
    <div className="flex h-screen flex-col overflow-hidden border-r border-[#3955a3] bg-[#ebebeb] font-['Open_Sans','Noto_Sans_CJK_SC',sans-serif]">
      <header className="shrink-0 bg-[#3955a3]">
        <TitleBar />
        <TabBar />
      </header>
      <Ribbon />
      <div className="flex min-h-0 flex-1">
        <ShapesPanel />
        <Workspace />
      </div>
      <StatusBar />
    </div>
  );
}
